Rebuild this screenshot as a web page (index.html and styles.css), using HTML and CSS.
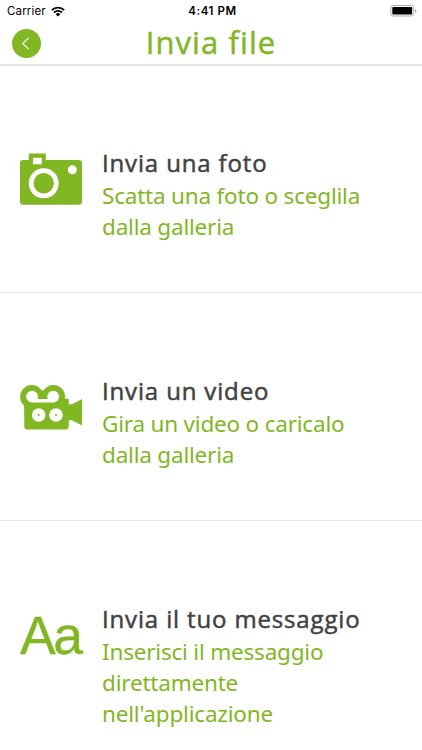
FILE: index.html
```html
<!DOCTYPE html>
<html lang="it">
<head>
    <meta charset="UTF-8">
    <meta name="viewport" content="width=device-width, initial-scale=1.0">
    <title>Invia file</title>
    <link rel="stylesheet" href="styles.css">
</head>
<body>
    <header class="header">
        <div class="status-bar">
            <div class="carrier">
                <span>Carrier</span>
                <svg width="14" height="11" viewBox="0 0 14 11">
                    <path d="M0.8 4.1a9 9 0 0 1 12.4 0M3 6.5a5.8 5.8 0 0 1 8 0" fill="none" stroke="#000" stroke-width="1.9"/>
                    <path d="M4.7 8.2a3.3 3.3 0 0 1 4.6 0L7 10.6z"/>
                </svg>
            </div>
            <span class="time">4:41 PM</span>
            <div class="battery">
                <svg width="27" height="13" viewBox="0 0 27 13">
                    <rect x="0.8" y="0.5" width="22.8" height="10.5" rx="2.4" fill="#fff" stroke="#aaa"/>
                    <rect x="2.3" y="2" width="19.8" height="7.5" rx="1"/>
                    <path d="M25 4q3 2 0 4z" fill="#aaa"/>
                </svg>
            </div>
        </div>
        <div class="title-bar">
            <button class="back-btn" aria-label="Indietro">
                <svg width="29" height="29" viewBox="0 0 29 29">
                    <path d="M16.6 8.8l-5.9 5.7 5.9 5.7" fill="none" stroke="#fff" stroke-width="1.1"/>
                </svg>
            </button>
            <h1>Invia file</h1>
        </div>
    </header>

    <main class="menu">
        <a class="menu-item" href="#">
            <svg class="icon" width="62" height="62" viewBox="0 0 62 62">
                <path fill-rule="evenodd" d="M3 12.9h5.8V6.5h17v6.4H59a3 3 0 0 1 3 3v38.8a3 3 0 0 1-3 3H3a3 3 0 0 1-3-3V15.9a3 3 0 0 1 3-3zM13 10.7v6.5h8.8v-6.5zM23.7 21.3a15 15 0 1 0 0 30 15 15 0 0 0 0-30zM52.3 18.2a4.5 4.5 0 1 0 0 9 4.5 4.5 0 0 0 0-9z"/>
                <circle cx="23.7" cy="36.3" r="10.2"/>
            </svg>
            <div class="text">
                <h2>Invia una foto</h2>
                <p>Scatta una foto o sceglila dalla galleria</p>
            </div>
        </a>
        <a class="menu-item" href="#">
            <svg class="icon" width="62" height="62" viewBox="0 0 62 62">
                <path d="M4 23.7h44.7v5.6H52l10-5.3v26.6l-10-5.3h-3.3v6.2a3 3 0 0 1-3 3H7.3a3 3 0 0 1-3-3z"/>
                <circle cx="11.8" cy="21.7" r="11.7"/>
                <circle cx="33.4" cy="21.7" r="11.7"/>
                <path d="M14 15.5h17V34H14z"/>
                <circle class="hole" cx="12.1" cy="21.6" r="5.9"/>
                <circle class="hole" cx="33.2" cy="21.6" r="5.9"/>
                <path class="hole" d="M12 24h21.5v3.5H12z"/>
                <circle class="hole" cx="18.7" cy="40" r="6.8"/>
                <circle class="hole" cx="36" cy="40" r="6.8"/>
                <circle cx="18.7" cy="40" r="1.1"/>
                <circle cx="36" cy="40" r="1.1"/>
            </svg>
            <div class="text">
                <h2>Invia un video</h2>
                <p>Gira un video o caricalo dalla galleria</p>
            </div>
        </a>
        <a class="menu-item" href="#">
            <span class="icon letters">Aa</span>
            <div class="text">
                <h2>Invia il tuo messaggio</h2>
                <p>Inserisci il messaggio direttamente nell'applicazione</p>
            </div>
        </a>
    </main>
</body>
</html>
```
FILE: styles.css
```css
* { margin: 0; padding: 0; box-sizing: border-box; }
body {
    font-family: "Noto Sans", sans-serif;
    background-color: #fff;
    height: 100vh;
    overflow: hidden;
}
.header {
    height: 66px;
    border-bottom: 2px solid #e6e6e6;
}
.status-bar {
    display: grid;
    grid-template-columns: 1fr auto 1fr;
    align-items: center;
    height: 22px;
    padding: 0 5px 0 7px;
    font-family: Inter, sans-serif;
    font-size: 11.5px;
    color: #000;
}
.carrier { display: flex; align-items: center; gap: 5px; letter-spacing: 0.15px; }
.time { font-weight: 600; letter-spacing: 0.6px; padding-left: 1px; }
.battery { display: flex; justify-content: flex-end; }
.title-bar {
    display: grid;
    grid-template-columns: 29px 1fr 29px;
    align-items: center;
    height: 42px;
    padding: 0 12px;
}
.back-btn {
    width: 29px; height: 29px; border: none; border-radius: 50%;
    background-color: #82b724; cursor: pointer;
}
.back-btn svg { display: block; }
.title-bar h1 {
    font-family: "Open Sans", sans-serif; font-size: 31px; font-weight: 400;
    line-height: 38px; letter-spacing: 1.1px; padding-bottom: 2px;
    text-align: center; color: #82b724; -webkit-text-stroke: 0.5px #82b724;
}
.menu-item {
    display: flex;
    gap: 20px;
    height: 228px;
    padding: 82px 20px 0;
    border-bottom: 1px solid #e8e8e8;
    text-decoration: none;
}
.menu-item:first-child { height: 227px; padding-top: 81px; }
.menu-item:last-child { border-bottom: none; }
.icon { flex: none; width: 62px; height: 62px; fill: #82b724; }
.hole { fill: #fff; }
.letters {
    font-family: "Liberation Sans", sans-serif; font-size: 53.5px;
    line-height: 66px; letter-spacing: -2.5px; color: #82b724;
    -webkit-text-stroke: 0.4px #82b724;
}
.text h2 {
    font-family: "Open Sans", sans-serif; font-size: 24px; font-weight: 400;
    line-height: 31px; letter-spacing: 0.85px; color: #424242; white-space: nowrap;
    -webkit-text-stroke: 0.5px #424242;
}
.text p {
    width: 280px; margin-top: 2px; font-size: 22.5px; line-height: 31px;
    letter-spacing: -0.2px; color: #82b724;
}
```
